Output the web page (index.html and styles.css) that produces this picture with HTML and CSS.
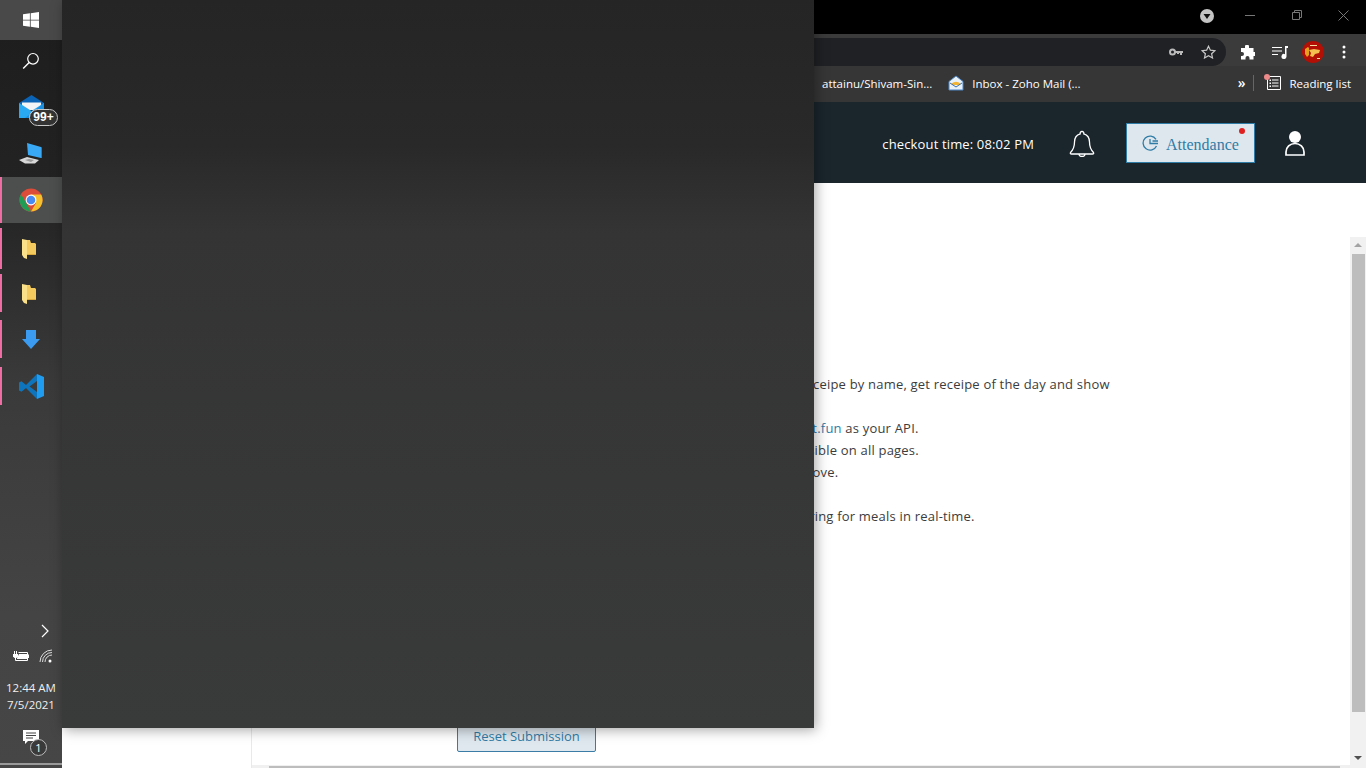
FILE: index.html
```html
<!DOCTYPE html>
<html lang="en">
<head>
<meta charset="utf-8">
<title>Desktop</title>
<link rel="stylesheet" href="styles.css">
</head>
<body>
<div class="desktop">
  <aside class="taskbar">
    <div class="tb-start">
      <svg width="16" height="16" viewBox="0 0 16 16"><path fill="#fff" d="M0 2.300l6.900-1v6.400H0zM7.700 1.200L16 0v7.700H7.700zM0 8.400h6.900v6.400L0 13.800zM7.700 8.400H16V16l-8.300-1.200z"/></svg>
    </div>
    <div class="tb-item tb-search">
      <svg width="18" height="18" viewBox="0 0 18 18" fill="none" stroke="#fff" stroke-width="1.200"><circle cx="11" cy="6.800" r="5.300"/><path d="M7.200 10.600L1.200 16.600" stroke-width="1.400"/></svg>
    </div>
    <div class="tb-item tb-mail">
      <svg width="25" height="23" viewBox="0 0 25 23"><path fill="#0a63b5" d="M0 8L12.500 0 25 8v2H0z"/><path fill="#f2f4f6" d="M3 7.500h19V15H3z"/><path fill="#29a9f2" d="M0 8l12.500 8L25 8v15H0z"/><path fill="#1b8ee0" d="M25 8v15H6z"/></svg>
      <span class="badge-mail">99+</span>
    </div>
    <div class="tb-item tb-pc">
      <svg width="24" height="22" viewBox="0 0 24 22"><path fill="#3aa9f5" d="M8 0l14 4v11L9 12z"/><path fill="#1f7fcb" d="M22 4l1 .5V15h-1z"/><path fill="#d8d8d8" d="M0 17l8-3 12 3-4 3.500H6z"/><path fill="#9a9a9a" d="M6 17l4-1 5 1-3 2z"/></svg>
    </div>
    <div class="tb-app tb-chrome">
      <svg width="24" height="24" viewBox="0 0 24 24"><circle cx="12" cy="12" r="11.500" fill="#dd4b39"/><path fill="#1f9d55" d="M12 23.500A11.500 11.500 0 0 1 2 6.300l6 10.200 4 7z"/><path fill="#f6c02c" d="M12 6.500h10.200A11.500 11.500 0 0 1 12 23.500l5-8.500z"/><circle cx="12" cy="12" r="5.400" fill="#fff"/><circle cx="12" cy="12" r="4.300" fill="#4a8af4"/></svg>
    </div>
    <div class="tb-app tb-folder">
      <svg width="14" height="20" viewBox="0 0 14 20"><path fill="#f4c95d" d="M5 1h3l1 3h4l1 1v10H5z"/><path fill="#fbe08a" d="M0 0l5 1v19l-3-1-2-3z"/><path fill="#d9a93d" d="M5 15h9v1H5z"/></svg>
    </div>
    <div class="tb-app tb-folder2">
      <svg width="14" height="20" viewBox="0 0 14 20"><path fill="#f4c95d" d="M5 1h3l1 3h4l1 1v10H5z"/><path fill="#fbe08a" d="M0 0l5 1v19l-3-1-2-3z"/><path fill="#d9a93d" d="M5 15h9v1H5z"/></svg>
    </div>
    <div class="tb-app tb-down">
      <svg width="18" height="19" viewBox="0 0 18 19"><path fill="#3a9bf0" d="M4 0h10v9h4l-9 10-9-10h4z"/></svg>
    </div>
    <div class="tb-app tb-code">
      <svg width="25" height="25" viewBox="0 0 25 25"><path fill="#0e75bd" d="M18 0L7 11 2.500 7.300 0 8.500v8L2.500 17.700 7 14l11 11V18L10.500 12.500 18 7z"/><path fill="#1f9cf0" d="M18 0l7 3v19l-7 3z"/></svg>
    </div>
    <div class="tb-spacer"></div>
    <div class="tb-chev">
      <svg width="10" height="14" viewBox="0 0 10 14" fill="none" stroke="#fff" stroke-width="1.200"><path d="M2 1l6 6-6 6"/></svg>
    </div>
    <div class="tb-tray">
      <svg width="16" height="10" viewBox="0 0 16 10"><path fill="none" stroke="#fff" d="M1.500 0v3M3.500 0v3"/><path fill="#fff" d="M0 3h5v2.500L3.500 7h-2L0 5.500z"/><path fill="none" stroke="#fff" d="M2.500 7v2.500h12v-8h-9"/><path fill="#fff" d="M6 3h8v5H4V7zM15 3.500h1v3.500h-1z"/></svg>
      <svg width="14" height="14" viewBox="0 0 14 14" fill="none" stroke="#ddd"><path d="M1 13A12 12 0 0 1 13 1M3.500 13A9.500 9.500 0 0 1 13 3.500M6 13A7 7 0 0 1 13 6"/><circle cx="11" cy="12" r="1.500" fill="#fff" stroke="none"/></svg>
    </div>
    <div class="tb-clock"><span>12:44 AM</span><span>7/5/2021</span></div>
    <div class="tb-notify">
      <svg width="16" height="15" viewBox="0 0 16 15"><path fill="#fff" d="M0 0h16v11H5l-3 3v-3H0z"/><path stroke="#444" d="M3 3h10M3 5.500h10M3 8h7"/></svg>
      <span class="badge-note">1</span>
    </div>
    <div class="tb-line"></div>
  </aside>

  <div class="browser">
    <div class="titlebar">
      <svg class="tl-down" width="14" height="14" viewBox="0 0 14 14"><circle cx="7" cy="7" r="7" fill="#c4c4c4"/><path fill="#111" d="M3.500 5h7L7 10z"/></svg>
      <svg class="tl-min" width="10" height="10" viewBox="0 0 10 10"><path stroke="#777" d="M0 5.500h10"/></svg>
      <svg class="tl-max" width="10" height="10" viewBox="0 0 10 10" fill="none" stroke="#777"><path d="M.5 2.500h7v7h-7zM2.500 2.500v-2h7v7h-2"/></svg>
      <svg class="tl-close" width="11" height="11" viewBox="0 0 11 11"><path stroke="#777" d="M.5.500l10 10M10.500.500l-10 10"/></svg>
    </div>
    <div class="toolbar">
      <div class="omnibox">
        <svg class="om-key" width="14" height="8" viewBox="0 0 14 8"><circle cx="3.500" cy="4" r="2.500" fill="none" stroke="#bbb" stroke-width="2"/><path fill="#bbb" d="M6 3h8v2h-1v2h-2V5h-1v1H8V5H6z"/></svg>
        <svg class="om-star" width="15" height="14" viewBox="0 0 15 14"><path fill="none" stroke="#c8c8c8" stroke-width="1.200" d="M7.500 1.200l1.900 4 4.400.5-3.200 3 .9 4.300-4-2.200-4 2.200.9-4.300-3.200-3 4.400-.5z"/></svg>
      </div>
      <div class="tools">
        <svg width="15" height="15" viewBox="0 0 15 15"><path fill="#fff" d="M5 1.500a2 2 0 0 1 4 0V3h4.500v4H15a2 2 0 0 1 0 4h-1.500v3.500H9.500V13a2 2 0 0 0-4 0v1.500H1V11h1a2 2 0 0 0 0-4H1V3h4z"/></svg>
        <svg width="16" height="13" viewBox="0 0 16 13"><path stroke="#fff" stroke-width="1.200" d="M0 1.500h10M0 5h10M0 8.500h6"/><path fill="#fff" d="M13 0h3v2h-1.500v8.500a2.500 2.500 0 1 1-1.500-2.300z"/></svg>
        <svg class="avatar" width="22" height="22" viewBox="0 0 22 22"><circle cx="11" cy="11" r="11" fill="#b30f05"/><path fill="#e8a020" d="M3 8l3-2 1 1v7l-2 2-2-3z"/><path fill="#f3c050" d="M7 9l5-1 6 1-1 3-4 1-2 3-3-1 1-3z"/><path fill="#f5e0a0" d="M8 4h7v1H8zM15 17h3v1h-3z"/></svg>
        <svg class="dots" width="4" height="14" viewBox="0 0 4 14"><circle cx="2" cy="2" r="1.500" fill="#fff"/><circle cx="2" cy="7" r="1.500" fill="#fff"/><circle cx="2" cy="12" r="1.500" fill="#fff"/></svg>
      </div>
    </div>
    <div class="bookmarks">
      <span class="bm bm-first">attainu/Shivam-Sin...</span>
      <svg class="bm-icon" width="16" height="16" viewBox="0 0 16 16"><path fill="#e8f0f8" stroke="#4d86c6" d="M1 6.500L8 1l7 5.500V15H1z"/><path fill="#f1b434" d="M3.500 8.500Q8 5 12.500 8.500L12 10H4z"/><path fill="none" stroke="#3c6fa8" d="M2 8l6 4 6-4"/></svg>
      <span class="bm">Inbox - Zoho Mail (...</span>
      <span class="bm-spacer"></span>
      <span class="bm-more">»</span>
      <span class="bm-sep"></span>
      <span class="bm-read">
        <svg width="15" height="14" viewBox="0 0 15 14"><path fill="none" stroke="#fff" d="M1.500.500h13v13h-13z"/><path stroke="#fff" d="M6 4h6.500M6 7h6.500M6 10h6.500"/><path fill="#fff" d="M3.500 3.500h1.500v1.500H3.500zM3.500 6.500h1.500V8H3.500zM3.500 9.500h1.500V11H3.500z"/></svg>
        <span class="read-dot"></span>
      </span>
      <span class="bm">Reading list</span>
    </div>
    <header class="appbar">
      <span class="checkout">checkout time: 08:02 PM</span>
      <svg class="bell" width="26" height="27" viewBox="0 0 26 27" fill="none" stroke="#fff" stroke-width="1.300"><path d="M13 1.500a1.800 1.800 0 0 1 1.800 2.300C19 5 20.500 8.500 20.500 12c0 6 1.500 8 4 10.500.5.800 0 1.500-1 1.500H2.500c-1 0-1.500-.7-1-1.500C4 20 5.500 18 5.500 12c0-3.500 1.500-7 5.700-8.200A1.800 1.800 0 0 1 13 1.500z"/><path d="M10 24a3 2.500 0 0 0 6 0"/></svg>
      <button class="attendance" type="button">
        <svg class="att-icon" width="16" height="16" viewBox="0 0 16 16" fill="none" stroke="#2f7ca6" stroke-width="1.300"><path d="M14 4.300A7 7 0 1 0 14.500 11M8 4v4.500h3M10.500 6H16M11 8.500h5"/></svg>
        <span>Attendance</span>
        <i class="att-dot"></i>
      </button>
      <svg class="user" width="20" height="25" viewBox="0 0 20 25"><circle cx="10" cy="6" r="6" fill="#fff"/><path fill="none" stroke="#fff" stroke-width="1.700" d="M1 24v-3a9 8.500 0 0 1 18 0v3z"/></svg>
    </header>
    <main class="content">
      <section class="card">
        <div class="card-body">
          <div class="brief">
            <p class="ln ln-a">receipe by name, get receipe of the day and show</p>
            <p class="ln ln-gap"></p>
            <p class="ln ln-b"><a class="link">list.fun</a> as your API.</p>
            <p class="ln ln-c">visible on all pages.</p>
            <p class="ln ln-d">above.</p>
            <p class="ln ln-gap"></p>
            <p class="ln ln-e">ordering for meals in real-time.</p>
          </div>
          <button class="reset" type="button">Reset Submission</button>
        </div>
        <div class="hscroll"><div class="hthumb"></div></div>
      </section>
      <div class="vscroll">
        <span class="arrow-up"></span>
        <div class="vthumb"></div>
        <span class="arrow-down"></span>
      </div>
    </main>
  </div>

  <div class="start-panel"></div>
</div>
</body>
</html>
```
FILE: styles.css
```css
* { box-sizing: border-box; }
html, body { margin: 0; padding: 0; height: 768px; overflow: hidden; background: #fff; }
body { font-family: "Open Sans", "Liberation Sans", sans-serif; font-size: 13px; color: #333; }
svg { display: block; flex: none; }

.desktop { position: relative; display: flex; width: 1366px; height: 768px; overflow: hidden; }

/* taskbar */
.taskbar {
  width: 62px; flex: none; display: flex; flex-direction: column; color: #fff;
  background: linear-gradient(180deg, #1d1d1d 0%, #232323 25%, #3a3a3a 50%, #444 80%, #464646 100%);
}
.tb-start { height: 40px; background: #494949; display: flex; align-items: center; justify-content: center; }
.tb-item { position: relative; display: flex; align-items: center; justify-content: center; }
.tb-search { height: 42px; }
.tb-mail { height: 48px; padding-right: 0; }
.tb-pc { height: 47px; }
.badge-mail {
  position: absolute; left: 29px; top: 27px; width: 29px; height: 17px; border-radius: 9px;
  border: 1px solid #c8c8c8; background: #333; color: #fff; font-size: 12px; font-weight: 600;
  line-height: 15px; text-align: center; font-family: "Liberation Sans", sans-serif;
}
.tb-app { display: flex; align-items: center; justify-content: center; border-left: 2px solid #ee6ea4; padding-right: 2px; }
.tb-chrome { height: 46px; background: #4d4e4e; }
.tb-folder { height: 41px; margin-top: 5px; padding-right: 6px; }
.tb-folder2 { height: 38px; margin-top: 5px; padding: 1px 6px 0 0; }
.tb-down { height: 38px; margin-top: 8px; }
.tb-code { height: 38px; margin-top: 9px; }
.tb-spacer { flex: 1; }
.tb-chev { height: 16px; display: flex; justify-content: flex-end; padding-right: 12px; }
.tb-tray { display: flex; align-items: center; justify-content: space-between; padding: 0 9px 0 13px; margin-top: 9px; height: 14px; }
.tb-clock {
  display: flex; flex-direction: column; align-items: center; margin-top: 16px; font-size: 11.5px; line-height: 17px;
  font-family: "Open Sans", sans-serif; color: #f0f0f0;
}
.tb-notify { position: relative; height: 42px; margin-top: 8px; padding: 9px 0 0 23px; }
.badge-note {
  position: absolute; left: 30px; top: 18px; width: 17px; height: 17px; border-radius: 50%;
  border: 1px solid #bbb; background: #3a3a3a; color: #fff; font-size: 11px; line-height: 15px; text-align: center;
}
.tb-line { height: 2px; margin-bottom: 3px; background: #9a9a9a; }

/* browser */
.browser { flex: 1; min-width: 0; display: flex; flex-direction: column; }
.titlebar {
  height: 34px; flex: none; background: #000; display: flex; align-items: center; justify-content: flex-end;
}
.tl-down { margin-right: 31px; margin-top: -2px; }
.tl-min { margin-right: 37px; margin-top: -4px; }
.tl-max { margin-right: 36px; margin-top: -4px; }
.tl-close { margin-right: 17px; margin-top: -4px; }

.toolbar { height: 32px; flex: none; background: #3b3b3b; display: flex; align-items: flex-end; }
.omnibox {
  flex: 1; height: 28px; margin-right: 14px; background: #202124; border-radius: 0 14px 14px 0;
  display: flex; align-items: center; justify-content: flex-end; padding-right: 10px; gap: 18px;
}
.tools { width: 126px; height: 28px; flex: none; display: flex; align-items: center; gap: 17px; }
.avatar { margin-left: -3px; }
.dots { margin-left: 1px; }

.bookmarks {
  height: 36px; flex: none; background: #363636; display: flex; align-items: center; color: #fff; font-size: 11.5px;
  padding: 0 15px 2px 0; font-family: "Open Sans", sans-serif;
}
.bm-first { margin-left: 760px; }
.bm-icon { margin: 0 8px 0 16px; }
.bm { white-space: nowrap; }
.bm-spacer { flex: 1; }
.bm-more { font-size: 14px; font-weight: 600; margin-right: 8px; line-height: 14px; }
.bm-sep { width: 1px; height: 16px; background: #666; margin-right: 11px; }
.bm-read { position: relative; margin-right: 8px; margin-left: 1px; }
.read-dot { position: absolute; left: -2px; top: -2px; width: 6px; height: 6px; border-radius: 50%; background: #ee8a8a; }

.appbar {
  height: 81px; flex: none; background: #1a252c; display: flex; align-items: center; justify-content: flex-end;
  padding: 2px 61px 0 0; color: #fff;
}
.checkout { font-size: 13px; letter-spacing: .14px; white-space: nowrap; }
.bell { margin-left: 35px; }
.attendance {
  position: relative; width: 129px; height: 40px; margin-left: 31px; margin-top: -2px; padding: 4px 0 0 15px;
  display: flex; align-items: center; gap: 8px; background: #dfe7ee; border: 1px solid #2f7ca6;
  color: #2f7ca6; font-family: "Liberation Serif", serif; font-size: 16px;
}
.att-icon { margin-top: -4px; }
.att-dot { position: absolute; right: 9px; top: 4px; width: 6px; height: 6px; border-radius: 50%; background: #e02020; }
.user { margin-left: 30px; }

/* page content */
.content { flex: 1; min-height: 0; display: flex; padding: 54px 0 0 189px; background: #fff; }
.card { flex: 1; min-width: 0; display: flex; flex-direction: column; border-left: 1px solid #e8e8ef; }
.card-body { flex: 1; min-height: 0; position: relative; padding-top: 136px; overflow: hidden; }
.ln { margin: 0; height: 22px; line-height: 22px; white-space: nowrap; font-size: 13px; color: #3c3c3c; letter-spacing: .2px; }
.ln-a { margin-left: 548px; }
.ln-b { margin-left: 547px; }
.ln-c { margin-left: 546px; }
.ln-d { margin-left: 545px; }
.ln-e { margin-left: 528px; }
.link { color: #2f7ca6; }
.reset {
  position: absolute; left: 205px; bottom: 13px; width: 139px; height: 32px; padding: 0; border: 1px solid #3a7ca5; border-radius: 2px;
  background: #dfe8ef; color: #2f7ca6; font-family: "Open Sans", sans-serif; font-size: 13px;
}
.hscroll { height: 3px; flex: none; background: #f0f0f0; padding-left: 17px; }
.hthumb { height: 2px; margin-top: 1px; width: 1071px; background: #bdbdbd; }
.vscroll { width: 16px; flex: none; background: #f1f1f1; position: relative; display: flex; flex-direction: column; align-items: center; padding-top: 17px; }
.vthumb { width: 13px; height: 458px; background: #bdbdbd; }
.arrow-up { position: absolute; top: 6px; left: 4px; border: 4px solid transparent; border-top: 0; border-bottom: 4px solid #a3a3a3; }
.arrow-down { position: absolute; bottom: 8px; left: 4px; border: 4px solid transparent; border-bottom: 0; border-top: 4px solid #505050; }

/* start menu panel over everything */
.start-panel {
  position: absolute; left: 62px; top: 0; width: 752px; height: 728px;
  background: linear-gradient(180deg, #262525 0%, #2a2929 20%, #343434 32%, #393a3a 100%);
  box-shadow: 2px 2px 12px rgba(0, 0, 0, .35);
}
```
